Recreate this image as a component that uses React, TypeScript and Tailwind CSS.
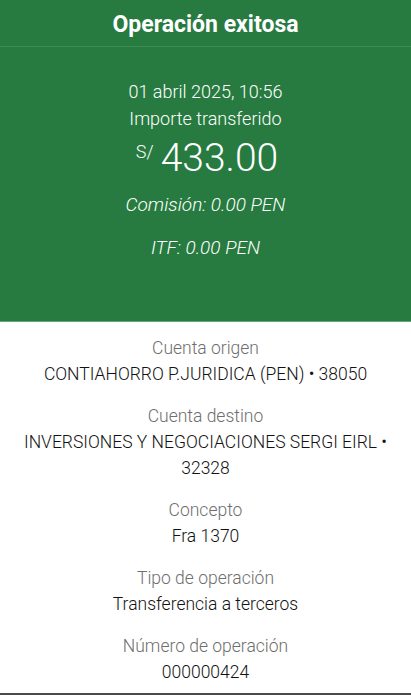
import React from "react";

const rows: { label: string; value: React.ReactNode }[] = [
  { label: "Cuenta origen", value: "CONTIAHORRO P.JURIDICA (PEN) • 38050" },
  {
    label: "Cuenta destino",
    value: (
      <>
        INVERSIONES Y NEGOCIACIONES SERGI EIRL •
        <br />
        32328
      </>
    ),
  },
  { label: "Concepto", value: "Fra 1370" },
  { label: "Tipo de operación", value: "Transferencia a terceros" },
  { label: "Número de operación", value: "000000424" },
];

export default function App() {
  return (
    <div
      className="w-[411px] h-[695px] overflow-hidden bg-white flex flex-col"
      style={{ fontFamily: "Roboto, 'Liberation Sans', sans-serif" }}
    >
      <div className="bg-[#277b40] text-white">
        <div className="h-[47px] flex items-center justify-center pt-[3px] border-b border-[#3d8a53]">
          <span className="text-[23px] font-bold leading-none">Operación exitosa</span>
        </div>
        <div className="flex flex-col items-center pt-[32px] pb-[60px] border-b border-[#66a87a]">
          <div className="text-[18px] font-light leading-[26px]">01 abril 2025, 10:56</div>
          <div className="text-[18px] font-light leading-[26px] mt-[1px]">Importe transferido</div>
          <div className="flex items-start h-[46px] mt-[3px] pl-[3px]">
            <span className="text-[18px] font-light leading-none mt-[8px] mr-[7px]">S/</span>
            <span className="text-[39px] font-light leading-[46px]">433.00</span>
          </div>
          <div className="text-[19px] font-light italic leading-[26px] mt-[11px]">Comisión: 0.00 PEN</div>
          <div className="text-[19px] font-light italic leading-[26px] mt-[17px]">ITF: 0.00 PEN</div>
        </div>
      </div>
      <div className="flex flex-col items-center gap-[16px] pt-[13px] text-center">
        {rows.map((r) => (
          <div key={r.label} className="flex flex-col items-center">
            <div className="text-[17.5px] font-light leading-[26px] text-[#6e6e6e]">{r.label}</div>
            <div className="text-[17.5px] font-light leading-[26px] text-[#121212] whitespace-nowrap">{r.value}</div>
          </div>
        ))}
      </div>
      <div className="mt-auto h-[2px] bg-[#4a4a4a]" />
    </div>
  );
}
